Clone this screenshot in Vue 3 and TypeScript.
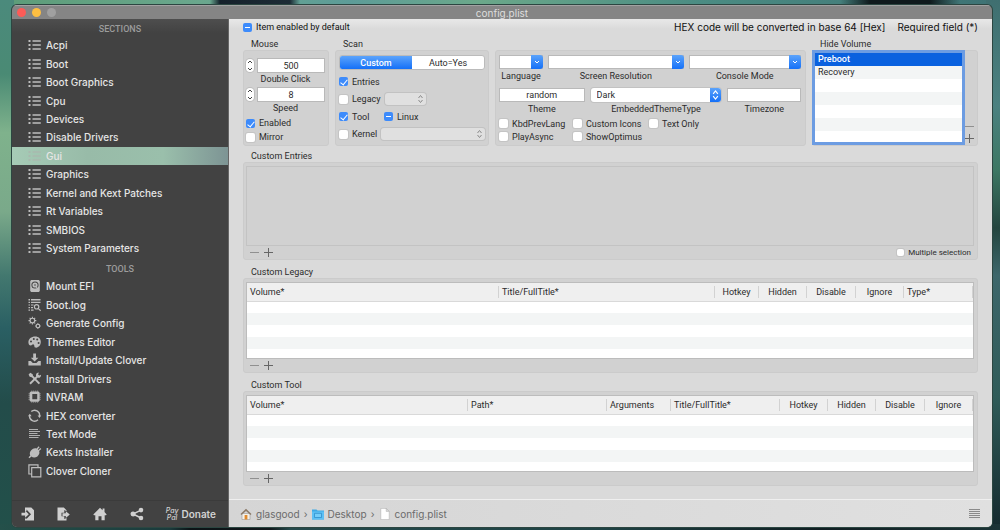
<script setup lang="ts">
import { ref } from 'vue'

interface Shape {
  d: string
  stroke?: number
}
interface NavItem {
  label: string
  icon: string
}
interface Column {
  title: string
  width?: number
  center?: boolean
}

const icons: Record<string, Shape[]> = {
  list: [
    { d: 'M.5 2h2v2h-2zM.5 6h2v2h-2zM.5 10h2v2h-2z' },
    { d: 'M4.5 2.2h8.3v1.6H4.5zM4.5 6.2h8.3v1.6H4.5zM4.5 10.2h8.3v1.6H4.5z' },
  ],
  disk: [
    { d: 'M3.200 1h7.600l1 1v10l-1 1H3.200l-1-1V2zM7 2.400a3.600 3.600 0 1 0 0 7.200 3.600 3.600 0 1 0 0-7.200z' },
    { d: 'M7 3.400a2.600 2.600 0 1 1 0 5.200 2.600 2.600 0 1 1 0-5.200zM7 5.200a.8.8 0 1 0 0 1.600.8.8 0 1 0 0-1.600z' },
    { d: 'M8 7.500l2.500 3.500', stroke: 1.200 },
  ],
  log: [
    { d: 'M.5 1h1.5v1.4H.5zM3 1h9.5v1.4H3zM.5 3.8h1.5v1.2H.5zM3 3.8h9.5V5H3zM.5 6.4h1.5v1.2H.5zM3 6.4h2.6v1.2H3zM.5 9h1.5v1.2H.5zM3 9h2v1.2H3zM.5 11.6h1.5v1.2H.5zM3 11.6h2.6v1.2H3z' },
    { d: 'M8.6 6.6a2.2 2.2 0 1 1 0 4.4 2.2 2.2 0 0 1 0-4.4M10.3 10.6l2.4 2.2', stroke: 1.2 },
  ],
  gears: [
    { d: 'M4.4 2.3a2.3 2.3 0 1 1 0 4.6 2.3 2.3 0 0 1 0-4.6M4.4.7v1.6M4.4 6.9v1.6M.5 4.6h1.6M6.7 4.6h1.6M1.6 1.8l1.1 1.1M6.1 6.3l1.1 1.1M7.2 1.8 6.1 2.9M2.7 6.3 1.6 7.4', stroke: 1.1 },
    { d: 'M9.9 8.3a1.7 1.7 0 1 1 0 3.4 1.7 1.7 0 0 1 0-3.4M9.9 7v1.3M9.9 11.7V13M7 10h1.2M11.6 10h1.2M7.9 8l.8.8M11.1 11.2l.8.8M11.9 8l-.8.8M8.7 11.2l-.8.8', stroke: 1 },
  ],
  palette: [
    { d: 'M7.2 1.6C3.300 1.600.4 4 .4 7.200c0 2 .9 3.300 2.400 3.400 1.300 0 1.500-1.500 2.700-1.200 1.400.4.2 2.900 2.200 3.200 2.700.4 5.100-2.200 5.100-5.500 0-3.300-2.300-5.500-5.600-5.500zM3 5.400a1 1 0 1 1 0 2 1 1 0 0 1 0-2zM5.800 3.100a1 1 0 1 1 0 2 1 1 0 0 1 0-2zM9.200 3.600a1 1 0 1 1 0 2 1 1 0 0 1 0-2zM10.600 6.900a1 1 0 1 1 0 2 1 1 0 0 1 0-2z' },
  ],
  download: [
    { d: 'M5.200.5h2.800v4.200h2.400L6.600 8.600 2.800 4.700h2.400zM.4 8h2.400l2 2h3.600l2-2h2.400v4.500H.4z' },
  ],
  tools: [
    { d: 'M3.800 3.900 11.400 11.600', stroke: 2 },
    { d: 'M10.200 3.600 2 11.700', stroke: 2 },
    { d: 'M.6 2.400 2.300.8l2.400 1.400.3 2-1.300 1.100-2-.5zM9 1l1.900-.4-.8 1.800 1.200 1.100 1.700-.8c.2 2-1.100 3.300-2.900 3.100L8 4.100C7.900 2.700 8.300 1.500 9 1z' },
  ],
  chip: [
    { d: 'M2.800 1.600h7.700l1.200 1.200v7.700l-1.200 1.200H2.800l-1.200-1.200V2.800zM4.300 4v5.300h4.900V4z' },
    { d: 'M3.800.5v1.300M5.700.5v1.300M7.700.5v1.300M9.600.5v1.300M3.800 11.500v1.300M5.700 11.500v1.300M7.700 11.500v1.300M9.600 11.500v1.300M.5 3.800h1.300M.5 5.700h1.300M.5 7.700h1.300M.5 9.600h1.300M11.500 3.800h1.300M11.500 5.700h1.300M11.500 7.700h1.300M11.500 9.600h1.300', stroke: 0.6 },
  ],
  refresh: [
    { d: 'M3.300 2.600A5 5 0 0 1 11.600 7M10 10.800A5 5 0 0 1 1.600 6.600', stroke: 1.3 },
    { d: 'M9.600 6.500h3.600l-1.700 2.400zM0 7.200h3.600L1.800 4.700z' },
  ],
  text: [
    { d: 'M1 2.500h9M1 4.500h11M1 6.500h8.500M1 8.500h11M1 10.500h9.500', stroke: 0.9 },
  ],
  plug: [
    { d: 'M3.200 5.200C4.800 3.200 7 2.700 8.600 3.500L10.700 1.300l.9.9-1.900 2 .7.8 2-2 .9.9-2.200 2.200c.8 1.700.2 3.900-1.700 5.300-2 1.400-4.500 1.400-6 .1L1.500 13.200l-1-1L2.300 10.500C1.400 8.900 1.700 6.800 3.200 5.200z' },
  ],
  copy: [
    { d: 'M3.500 10H.9V.9H10v2.400M3.700 3.700h9.100v9.100H3.700z', stroke: 1.2 },
  ],
  importDoc: [
    { d: 'M4 .5h6.300L13 3.200V13.500H4v-2h1.500v.6L10 7.200 5.500 2.500V4H4z' },
    { d: 'M.5 5.800h3.600V3.600L7.800 7.200 4.100 10.800V8.600H.5z' },
  ],
  exportDoc: [
    { d: 'M.5.5h6.300L9.500 3.200v1L7.300 3v2.800H4.500v3.400h2.800v2.700L9.500 11v2.500h-9z' },
    { d: 'M5.500 6.300h3.300V4.200l4 3.400-4 3.500V8.900H5.500z' },
  ],
  home: [
    { d: 'M7 .8 9.600 3.300V1.500h1.900v3.600l2.200 2.300-.7.8h-1.300v5H8.500V9.300H5.500v3.900H2.300v-5H1l-.7-.8z' },
  ],
  share: [
    { d: 'M3 4.500a2.500 2.500 0 1 1 0 5 2.500 2.500 0 0 1 0-5zM11 .8a2.300 2.300 0 1 1 0 4.600 2.300 2.300 0 0 1 0-4.600zM11 8.700a2.300 2.300 0 1 1 0 4.600 2.300 2.300 0 0 1 0-4.600z' },
    { d: 'M11 3.100 3 7l8 4', stroke: 1.500 },
  ],
}

const sections: string[] = [
  'Acpi', 'Boot', 'Boot Graphics', 'Cpu', 'Devices', 'Disable Drivers', 'Gui', 'Graphics',
  'Kernel and Kext Patches', 'Rt Variables', 'SMBIOS', 'System Parameters',
]
const selected = ref('Gui')

const tools: NavItem[] = [
  { label: 'Mount EFI', icon: 'disk' },
  { label: 'Boot.log', icon: 'log' },
  { label: 'Generate Config', icon: 'gears' },
  { label: 'Themes Editor', icon: 'palette' },
  { label: 'Install/Update Clover', icon: 'download' },
  { label: 'Install Drivers', icon: 'tools' },
  { label: 'NVRAM', icon: 'chip' },
  { label: 'HEX converter', icon: 'refresh' },
  { label: 'Text Mode', icon: 'text' },
  { label: 'Kexts Installer', icon: 'plug' },
  { label: 'Clover Cloner', icon: 'copy' },
]

const shortcuts: NavItem[] = [
  { label: 'Import', icon: 'importDoc' },
  { label: 'Export', icon: 'exportDoc' },
  { label: 'Home', icon: 'home' },
  { label: 'Share', icon: 'share' },
]

const volumes = ['Preboot', 'Recovery', '', '', '', '', '']

const tables: { title: string; columns: Column[] }[] = [
  {
    title: 'Custom Legacy',
    columns: [
      { title: 'Volume*', width: 252 },
      { title: 'Title/FullTitle*' },
      { title: 'Hotkey', width: 44, center: true },
      { title: 'Hidden', width: 48, center: true },
      { title: 'Disable', width: 49, center: true },
      { title: 'Ignore', width: 48, center: true },
      { title: 'Type*', width: 69 },
    ],
  },
  {
    title: 'Custom Tool',
    columns: [
      { title: 'Volume*', width: 221 },
      { title: 'Path*' },
      { title: 'Arguments', width: 64 },
      { title: 'Title/FullTitle*', width: 109 },
      { title: 'Hotkey', width: 48, center: true },
      { title: 'Hidden', width: 48, center: true },
      { title: 'Disable', width: 49, center: true },
      { title: 'Ignore', width: 48, center: true },
    ],
  },
]

const doubleClick = ref('500')
const speed = ref('8')
const theme = ref('random')
</script>

<template>
  <div class="desktop">
    <div class="window">
      <header class="titlebar">
        <div class="lights">
          <button class="light close" aria-label="Close"></button>
          <button class="light minimize" aria-label="Minimize"></button>
          <button class="light zoom" aria-label="Zoom" disabled></button>
        </div>
        <h1>config.plist</h1>
      </header>

      <div class="body">
        <aside class="sidebar">
          <nav class="nav">
            <h2 class="first">SECTIONS</h2>
            <button
              v-for="name in sections"
              :key="name"
              class="item"
              :class="{ active: name === selected }"
              @click="selected = name"
            >
              <svg viewBox="0 0 14 14" class="icon">
                <path v-for="(s, i) in icons.list" :key="i" :d="s.d" />
              </svg>
              {{ name }}
            </button>
            <h2>TOOLS</h2>
            <button v-for="tool in tools" :key="tool.label" class="item">
              <svg viewBox="0 0 14 14" class="icon">
                <path
                  v-for="(s, i) in icons[tool.icon]"
                  :key="i"
                  :d="s.d"
                  :class="{ line: s.stroke }"
                  :stroke-width="s.stroke"
                />
              </svg>
              {{ tool.label }}
            </button>
          </nav>
          <div class="dock">
            <button v-for="s in shortcuts" :key="s.label" class="dock-button" :aria-label="s.label">
              <svg viewBox="0 0 14 14" class="icon">
                <path
                  v-for="(p, i) in icons[s.icon]"
                  :key="i"
                  :d="p.d"
                  :class="{ line: p.stroke }"
                  :stroke-width="p.stroke"
                />
              </svg>
            </button>
            <button class="donate">
              <span class="paypal"><span>Pay</span><span>Pal</span></span>
              Donate
            </button>
          </div>
        </aside>

        <main class="main">
          <div class="content">
            <div class="notes">
              <label class="check default"><input type="checkbox" :indeterminate="true" />Item enabled by default</label>
              <span>HEX code will be converted in base 64 [Hex]</span>
              <span>Required field (*)</span>
            </div>

            <div class="groups">
              <section class="group">
                <h3>Mouse</h3>
                <div class="box mouse">
                  <div class="stepper-row">
                    <span class="stepper">
                      <button aria-label="Increase double click"><svg viewBox="0 0 6 4"><path d="M1 3 3 1l2 2" /></svg></button>
                      <button aria-label="Decrease double click"><svg viewBox="0 0 6 4"><path d="M1 1l2 2 2-2" /></svg></button>
                    </span>
                    <input id="double-click" v-model="doubleClick" class="field" type="text" />
                  </div>
                  <label class="caption" for="double-click">Double Click</label>
                  <div class="stepper-row">
                    <span class="stepper">
                      <button aria-label="Increase speed"><svg viewBox="0 0 6 4"><path d="M1 3 3 1l2 2" /></svg></button>
                      <button aria-label="Decrease speed"><svg viewBox="0 0 6 4"><path d="M1 1l2 2 2-2" /></svg></button>
                    </span>
                    <input id="speed" v-model="speed" class="field" type="text" />
                  </div>
                  <label class="caption" for="speed">Speed</label>
                  <label class="check"><input type="checkbox" checked />Enabled</label>
                  <label class="check"><input type="checkbox" />Mirror</label>
                </div>
              </section>

              <section class="group">
                <h3>Scan</h3>
                <div class="box scan">
                  <div class="segments">
                    <button class="on">Custom</button>
                    <button>Auto=Yes</button>
                  </div>
                  <div class="scan-row">
                    <label class="check"><input type="checkbox" checked />Entries</label>
                  </div>
                  <div class="scan-row">
                    <label class="check"><input type="checkbox" />Legacy</label>
                    <span class="popup disabled short">
                      <select disabled aria-label="Legacy mode"><option></option></select>
                      <svg viewBox="0 0 6 10"><path d="M1 4l2-2.500L5 4M1 6l2 2.500L5 6" /></svg>
                    </span>
                  </div>
                  <div class="scan-row">
                    <label class="check tool">
                      <input type="checkbox" checked />Tool
                    </label>
                    <label class="check"><input type="checkbox" :indeterminate="true" />Linux</label>
                  </div>
                  <div class="scan-row">
                    <label class="check"><input type="checkbox" />Kernel</label>
                    <span class="popup disabled wide">
                      <select disabled aria-label="Kernel mode"><option></option></select>
                      <svg viewBox="0 0 6 10"><path d="M1 4l2-2.500L5 4M1 6l2 2.500L5 6" /></svg>
                    </span>
                  </div>
                </div>
              </section>

              <section class="group unnamed">
                <div class="box display">
                  <div class="top-fields">
                    <div class="stack">
                      <span class="combo">
                        <input id="language" type="text" />
                        <button aria-label="Show languages"><svg viewBox="0 0 8 8"><path d="M2 3l2 2 2-2" /></svg></button>
                      </span>
                      <label for="language">Language</label>
                    </div>
                    <div class="stack">
                      <span class="combo">
                        <input id="resolution" type="text" />
                        <button aria-label="Show resolutions"><svg viewBox="0 0 8 8"><path d="M2 3l2 2 2-2" /></svg></button>
                      </span>
                      <label for="resolution">Screen Resolution</label>
                    </div>
                    <div class="stack">
                      <span class="combo">
                        <input id="console" type="text" />
                        <button aria-label="Show console modes"><svg viewBox="0 0 8 8"><path d="M2 3l2 2 2-2" /></svg></button>
                      </span>
                      <label for="console">Console Mode</label>
                    </div>
                  </div>
                  <div class="theme-fields">
                    <div class="stack">
                      <input id="theme" v-model="theme" class="field" type="text" />
                      <label for="theme">Theme</label>
                    </div>
                    <div class="stack">
                      <span class="popup">
                        <select id="theme-type"><option>Dark</option><option>Light</option></select>
                        <svg viewBox="0 0 6 10"><path d="M1 4l2-2.500L5 4M1 6l2 2.500L5 6" /></svg>
                      </span>
                      <label for="theme-type">EmbeddedThemeType</label>
                    </div>
                    <div class="stack">
                      <input id="timezone" class="field" type="text" />
                      <label for="timezone">Timezone</label>
                    </div>
                  </div>
                  <div class="flags">
                    <label class="check"><input type="checkbox" />KbdPrevLang</label>
                    <label class="check"><input type="checkbox" />Custom Icons</label>
                    <label class="check"><input type="checkbox" />Text Only</label>
                    <label class="check"><input type="checkbox" />PlayAsync</label>
                    <label class="check"><input type="checkbox" />ShowOptimus</label>
                  </div>
                </div>
              </section>

              <section class="group">
                <h3>Hide Volume</h3>
                <div class="box hide">
                  <ul class="volumes">
                    <li v-for="(v, i) in volumes" :key="i" :class="{ chosen: i === 0 }">{{ v }}</li>
                  </ul>
                  <div class="edit vertical">
                    <button class="minus" aria-label="Remove volume"></button>
                    <button class="plus" aria-label="Add volume"></button>
                  </div>
                </div>
              </section>
            </div>

            <section class="group panel">
              <h3>Custom Entries</h3>
              <div class="box">
                <div class="entries"></div>
                <div class="edit">
                  <button class="minus" aria-label="Remove entry"></button>
                  <button class="plus" aria-label="Add entry"></button>
                  <label class="check multiple"><input type="checkbox" />Multiple selection</label>
                </div>
              </div>
            </section>

            <section v-for="t in tables" :key="t.title" class="group panel">
              <h3>{{ t.title }}</h3>
              <div class="box">
                <div class="table-frame">
                  <table>
                    <colgroup>
                      <col v-for="c in t.columns" :key="c.title" :style="c.width ? { width: c.width + 'px' } : {}" />
                    </colgroup>
                    <thead>
                      <tr>
                        <th v-for="c in t.columns" :key="c.title" :class="{ center: c.center }">
                          <span>{{ c.title }}</span>
                        </th>
                      </tr>
                    </thead>
                    <tbody>
                      <tr v-for="r in 5" :key="r"><td v-for="c in t.columns" :key="c.title"></td></tr>
                    </tbody>
                  </table>
                </div>
                <div class="edit">
                  <button class="minus" :aria-label="'Remove from ' + t.title"></button>
                  <button class="plus" :aria-label="'Add to ' + t.title"></button>
                </div>
              </div>
            </section>
          </div>

          <footer class="pathbar">
            <a href="#home">
              <svg viewBox="0 0 12 12" class="crumb">
                <path d="M2 5.500h8V11.500H2z" fill="#f4f0e8" stroke="#999" stroke-width=".6" />
                <path d="M6 .8 11.500 6l-1 .9L6 3 1.500 6.900l-1-.9z" fill="#8b7a68" />
                <path d="M4.600 7h2.800v4.500H4.600z" fill="#e08a2c" />
              </svg>glasgood</a>
            <span>›</span>
            <a href="#desktop">
              <svg viewBox="0 0 12 12" class="crumb">
                <path d="M0 1.500h4.500l1 1H12V11.500H0z" fill="#3fa9e4" />
                <path d="M0 3.500h12v8H0z" fill="#5cc0f5" />
                <path d="M2.500 5.300h7v4.200h-7z" fill="#74cdf9" stroke="#2e8fca" stroke-width=".8" />
              </svg>Desktop</a>
            <span>›</span>
            <a href="#config">
              <svg viewBox="0 0 12 12" class="crumb">
                <path d="M1.800.4h5.400l3 3v8.200H1.800z" fill="#fff" stroke="#aaa" stroke-width=".5" />
                <path d="M7.200.4v3h3z" fill="#ddd" stroke="#aaa" stroke-width=".5" />
              </svg>config.plist</a>
            <button class="menu" aria-label="Path menu"><i></i><i></i><i></i><i></i><i></i></button>
          </footer>
        </main>
      </div>
    </div>
  </div>
</template>

<style>
body {
  margin: 0;
}
</style>

<style scoped>
* {
  box-sizing: border-box;
}
.desktop {
  height: 100vh;
  min-height: 530px;
  padding: 5px 8px 3px 12px;
  font-family: Roboto, Inter, "Liberation Sans", sans-serif;
  font-size: 9px;
  line-height: 12px;
  color: #2b2b2b;
  background:
    linear-gradient(90deg, transparent 21%, #15212b 22%, #1d2c36 29%, transparent 30%, transparent 84%, #101a1d 87%, #101a1d 93%, transparent 96%) top / 100% 6px no-repeat,
    linear-gradient(90deg, #24504a, #1b3b3c 17%, #0c1316 19%, #10181c 27%, #24494b 29%, #1f4345 60%, #101e22 82%, #1b3336) bottom / 100% 6px no-repeat,
    linear-gradient(#4b8a7c, #4a8a74 14%, #7fb28c 25%, #7aa98a 40%, #43786f 52%, #2a5f63 62%, #234c4a 76%, #22504a) left / 14px 100% no-repeat,
    linear-gradient(#3f6f70, #4b8180 20%, #3c7763 32%, #24453f 43%, #3d676b 52%, #2f5b58 75%, #14292d) right / 14px 100% no-repeat,
    linear-gradient(90deg, #5c9c78, #6aa78d 20%, #5d9c98 35%, #6ba88a 48%, #4b8c83 70%, #3e7274);
}
button,
input,
select {
  margin: 0;
  padding: 0;
  border: 0;
  font: inherit;
  color: inherit;
  appearance: none;
  outline: none;
}
button {
  background: none;
}
h1,
h2,
h3,
ul {
  margin: 0;
  padding: 0;
  font-weight: 400;
}
.window {
  display: flex;
  flex-direction: column;
  height: 100%;
  overflow: hidden;
  border-radius: 5px;
  background: #858585;
  box-shadow: 0 0 0 1px #2c4641;
}
.titlebar {
  display: flex;
  flex: none;
  align-items: center;
  height: 14px;
  padding: 0 5px;
  border-top: 1px solid #a2a2a2;
}
.lights {
  display: flex;
  flex: 1;
  gap: 6px;
}
.titlebar::after {
  content: "";
  flex: 1;
}
.light {
  width: 9px;
  height: 9px;
  border-radius: 50%;
}
.close {
  background: #fc5b57;
}
.minimize {
  background: #fdbe41;
}
.zoom {
  background: #a0a0a0;
}
h1 {
  font-family: Inter, sans-serif;
  font-size: 10px;
  line-height: 12px;
  color: #dedede;
}
.body {
  display: flex;
  flex: 1;
  min-height: 0;
}
.sidebar {
  display: flex;
  flex-direction: column;
  flex: none;
  width: 217px;
  background: linear-gradient(#4e4e4e, #424242 14px);
  border-right: 1px solid #666;
  color: #e6e6e6;
}
.nav {
  display: flex;
  flex: 1;
  flex-direction: column;
  padding-bottom: 20px;
}
h2 {
  flex: none;
  font-size: 9px;
  font-weight: 500;
  line-height: 25px;
  height: 20px;
  text-align: center;
  color: #9c9c9c;
}
h2.first {
  height: 17px;
  line-height: 20px;
}
.item {
  display: flex;
  flex: 1;
  align-items: center;
  gap: 4px;
  padding: 0 16px;
  font-family: Inter, sans-serif;
  font-size: 10px;
  font-weight: 500;
  text-align: left;
}
.item.active {
  background: linear-gradient(90deg, #a6cbb6, #98bba8 35%, #9abfab 70%, #7d9494);
}
.item.active .icon {
  fill: #a9b9ae;
}
.icon {
  flex: none;
  width: 14px;
  height: 14px;
  fill: #bdbdbd;
  fill-rule: evenodd;
}
.line {
  fill: none;
  stroke: #bdbdbd;
}
.dock {
  display: flex;
  flex: none;
  align-items: center;
  justify-content: space-between;
  height: 27px;
  padding: 0 12px 0 9px;
  border-top: 1px solid #3b3b3b;
}
.dock-button {
  display: flex;
}
.dock .icon {
  fill: #d0d0d0;
}
.dock .line {
  stroke: #d0d0d0;
}
.donate {
  display: flex;
  align-items: center;
  gap: 3px;
  font-family: Inter, sans-serif;
  font-size: 10px;
  font-weight: 600;
  color: #d2d2d2;
}
.paypal {
  display: flex;
  flex-direction: column;
  font-size: 7px;
  font-style: italic;
  font-weight: 500;
  line-height: 7px;
}
.main {
  display: flex;
  flex: 1;
  flex-direction: column;
  min-width: 0;
  background: linear-gradient(#e8e8e8, #dadada 10px);
}
.content {
  flex: 1;
  padding: 0 14px;
}
.notes {
  display: flex;
  align-items: center;
  gap: 12px;
  height: 16px;
  font-family: Inter, sans-serif;
  font-size: 10px;
  color: #111;
}
.default {
  flex: 1;
  font-family: Roboto, sans-serif;
  font-size: 9px;
}
.groups {
  display: grid;
  grid-template-columns: 86px 154px 1fr 166px;
  gap: 6px;
  margin-top: 3px;
}
h3 {
  height: 12px;
  padding-left: 8px;
  font-size: 9px;
  line-height: 13px;
}
.group {
  display: flex;
  flex-direction: column;
  min-width: 0;
}
.unnamed {
  justify-content: flex-end;
}
.box {
  padding: 4px;
  border: 1px solid #cbcbcb;
  border-radius: 3px;
  background: #d1d1d1;
}
.groups .box {
  height: 96px;
}
.check {
  display: flex;
  align-items: center;
  gap: 4px;
  white-space: nowrap;
}
.check input {
  position: relative;
  flex: none;
  width: 9px;
  height: 9px;
  border-radius: 2px;
  background: #fff;
  box-shadow: 0 0 0 1px #c4c4c4;
}
.check input:checked,
.check input:indeterminate {
  background: #3d8bfb;
  box-shadow: none;
}
.check input:checked::after {
  content: "";
  position: absolute;
  top: 1px;
  left: 3px;
  width: 3px;
  height: 6px;
  border: solid #fff;
  border-width: 0 1px 1px 0;
  transform: rotate(40deg);
}
.check input:indeterminate::after {
  content: "";
  position: absolute;
  top: 4px;
  left: 2px;
  width: 5px;
  height: 1px;
  background: #fff;
}
.field,
.combo {
  width: 100%;
  height: 15px;
  border: 1px solid #b9b9b9;
  background: #fff;
  text-align: center;
}
.mouse {
  display: flex;
  flex-direction: column;
  padding: 7px 3px 0 2px;
}
.stepper-row {
  display: flex;
  align-items: center;
  gap: 3px;
}
.stepper {
  display: flex;
  flex-direction: column;
  flex: none;
  width: 8px;
  height: 13px;
  border-radius: 4px;
  background: #fff;
  box-shadow: 0 0 0 1px #bdbdbd;
}
.stepper button {
  display: flex;
  flex: 1;
  align-items: center;
  justify-content: center;
}
.stepper svg {
  width: 6px;
  height: 4px;
  fill: none;
  stroke: #444;
}
.caption {
  height: 14px;
  text-align: center;
}
.mouse .check {
  height: 14px;
}
.scan {
  display: flex;
  flex-direction: column;
  padding: 4px 3px 2px;
}
.segments {
  display: flex;
  flex: none;
  height: 15px;
  margin-bottom: 3px;
  overflow: hidden;
  border: 1px solid #bbb;
  border-radius: 3px;
  background: #fff;
}
.segments button {
  flex: 1;
}
.segments .on {
  background: linear-gradient(#5ba3fb, #1470f8);
  color: #fff;
  font-weight: 500;
}
.scan-row {
  display: flex;
  flex: 1;
  align-items: center;
  gap: 4px;
}
.scan-row .tool {
  width: 41px;
}
.popup {
  display: flex;
  position: relative;
  width: 100%;
  height: 14px;
  border-radius: 3px;
  background: #fff;
  box-shadow: 0 0 0 1px #c2c2c2;
}
.popup select {
  flex: 1;
  width: 100%;
  padding-left: 6px;
  background: transparent;
}
.popup svg {
  position: absolute;
  top: 0;
  right: 0;
  width: 11px;
  height: 14px;
  padding: 1px 2px;
  border-radius: 0 3px 3px 0;
  background: linear-gradient(#5ba3fb, #1470f8);
  fill: none;
  stroke: #fff;
  pointer-events: none;
}
.popup.disabled {
  height: 12px;
  background: #e0e0e0;
}
.popup.disabled svg {
  height: 12px;
  background: none;
  stroke: #8a8a8a;
}
.popup.short {
  width: 41px;
}
.wide {
  flex: 1;
}
.stack {
  display: flex;
  flex-direction: column;
  align-items: center;
  gap: 1px;
  min-width: 0;
}
.stack .field {
  height: 14px;
}
.combo {
  display: flex;
  height: 14px;
}
.combo input {
  flex: 1;
  width: 0;
  min-width: 0;
  background: transparent;
}
.combo button {
  display: flex;
  align-items: center;
  justify-content: center;
  flex: none;
  width: 12px;
  height: 14px;
  margin: -1px;
  border-radius: 0 3px 3px 0;
  background: linear-gradient(#5ba3fb, #1470f8);
}
.combo svg {
  width: 8px;
  height: 8px;
  fill: none;
  stroke: #fff;
}
.display {
  display: flex;
  flex-direction: column;
  padding: 4px 4px 2px 3px;
}
.top-fields {
  display: grid;
  grid-template-columns: 44px 135fr 112fr;
  gap: 5px;
}
.theme-fields {
  display: grid;
  grid-template-columns: 85fr 130fr 73fr;
  gap: 6px;
  margin-top: 6px;
}
.flags {
  display: grid;
  grid-template-columns: 70px 72px auto;
  grid-auto-rows: 13px;
  gap: 0 4px;
  margin-top: 2px;
}
.hide {
  display: flex;
  justify-content: space-between;
  padding: 2px 3px 2px 2px;
}
.volumes {
  width: 147px;
  height: 89px;
  overflow: hidden;
  list-style: none;
  background: #fff;
  box-shadow: 0 0 0 3px #6c9ce2;
}
.volumes li {
  height: 13px;
  padding-left: 3px;
  line-height: 13px;
}
.volumes li:nth-child(even) {
  background: #f3f5f5;
}
.volumes .chosen {
  background: #0a61df;
  color: #fff;
  font-weight: 500;
}
.edit {
  display: flex;
  align-items: center;
  gap: 4px;
  height: 13px;
  padding: 0 3px;
}
.minus,
.plus {
  flex: none;
  width: 10px;
  height: 10px;
  background: linear-gradient(#909090, #909090) center / 9px 1px no-repeat;
}
.plus {
  background:
    linear-gradient(#666, #666) center / 9px 1px no-repeat,
    linear-gradient(#666, #666) center / 1px 9px no-repeat;
}
.vertical {
  flex-direction: column;
  align-self: flex-end;
  gap: 2px;
  height: auto;
  padding: 0;
}
.multiple {
  margin-left: auto;
  font-size: 8px;
}
.multiple input {
  width: 7px;
  height: 7px;
}
.panel {
  margin-top: 4px;
}
.panel + .panel {
  margin-top: 6px;
}
.panel .box {
  padding: 3px 3px 0 2px;
}
.entries {
  height: 80px;
  border: 1px solid #c3c3c3;
}
.table-frame {
  height: 77px;
  overflow: hidden;
  border: 1px solid #bcbcbc;
  background: #fff;
}
table {
  width: 100%;
  border-collapse: collapse;
  table-layout: fixed;
}
th {
  height: 18px;
  padding: 2px 0;
  border-bottom: 1px solid #d9d9d9;
  background: #efefef;
  font-weight: 400;
  text-align: left;
  white-space: nowrap;
}
th span {
  display: block;
  padding-left: 3px;
  border-right: 1px solid #d2d2d2;
}
th.center {
  text-align: center;
}
th.center span {
  padding-left: 0;
}
td {
  height: 12px;
  padding: 0;
}
tbody tr:nth-child(even) {
  background: #f3f5f5;
}
.pathbar {
  display: flex;
  flex: none;
  align-items: center;
  gap: 4px;
  height: 28px;
  padding: 0 12px 0 11px;
  border-top: 1px solid #efefef;
  background: linear-gradient(90deg, #d5d5d5, #e0e0e0);
  font-family: Inter, sans-serif;
  font-size: 10px;
  color: #6b6b6b;
}
.pathbar a {
  display: flex;
  align-items: center;
  gap: 4px;
  color: inherit;
  text-decoration: none;
}
.crumb {
  width: 12px;
  height: 12px;
}
.menu {
  display: flex;
  flex-direction: column;
  gap: 1px;
  width: 11px;
  margin-left: auto;
}
.menu i {
  height: 1px;
  background: #8a8a8a;
}
</style>
